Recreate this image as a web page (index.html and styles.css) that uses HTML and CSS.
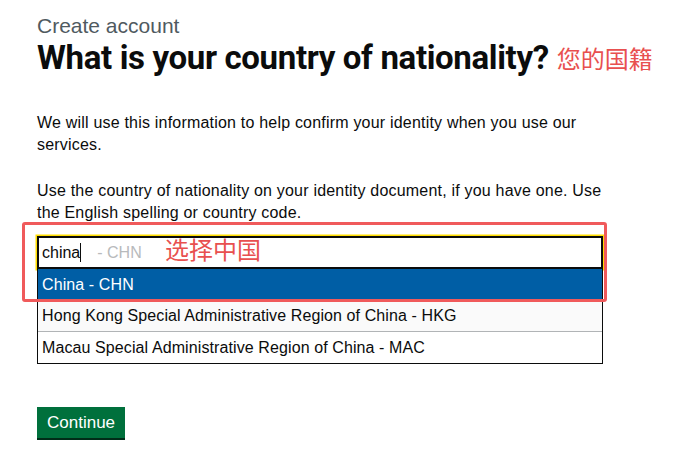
FILE: index.html
```html
<!DOCTYPE html>
<html lang="en">
<head>
<meta charset="utf-8">
<title>Create account - What is your country of nationality?</title>
<link rel="stylesheet" href="styles.css">
</head>
<body>
<main class="page">
  <span class="caption">Create account</span>
  <h1 class="heading">What is your country of nationality?<span class="note note-title">您的国籍</span></h1>
  <p class="body">We will use this information to help confirm your identity when you use our services.</p>
  <p class="body">Use the country of nationality on your identity document, if you have one. Use the English spelling or country code.</p>

  <div class="autocomplete">
    <div class="input">
      <span class="typed">china</span><span class="caret"></span><span class="hint">- CHN</span>
    </div>
    <ul class="menu">
      <li class="option option-active">China - CHN</li>
      <li class="option option-odd">Hong Kong Special Administrative Region of China - HKG</li>
      <li class="option">Macau Special Administrative Region of China - MAC</li>
    </ul>
    <div class="highlight"></div>
    <span class="note note-select">选择中国</span>
  </div>

  <button class="button" type="button">Continue</button>
</main>
</body>
</html>
```

FILE: styles.css
```css
html, body {
  margin: 0;
  padding: 0;
  background: #ffffff;
}

.page {
  padding: 14px 37px 20px 37px;
  font-family: "Liberation Sans", Arial, sans-serif;
  color: #0b0c0c;
  width: 580px;
}

.caption {
  display: block;
  font-size: 21px;
  line-height: 24px;
  color: #505a5f;
}

.heading {
  margin: 2px 0 0 0;
  font-family: Roboto, "Liberation Sans", sans-serif;
  font-weight: 700;
  font-size: 33px;
  line-height: 36px;
  letter-spacing: -0.35px;
  white-space: nowrap;
}

.note {
  font-family: "Noto Sans CJK SC", sans-serif;
  font-weight: 400;
  color: #e8504f;
  letter-spacing: 0;
}

.note-title {
  font-size: 24px;
  margin-left: 8px;
  vertical-align: 1px;
}

.body {
  margin: 0;
  font-size: 16px;
  line-height: 22px;
  letter-spacing: 0.2px;
  color: #0b0c0c;
}

.heading + .body {
  margin-top: 36px;
}

.body + .body {
  margin-top: 24px;
}

.autocomplete {
  position: relative;
  margin-top: 12px;
  width: 566px;
}

.input {
  height: 29px;
  border: 2px solid #0b0c0c;
  box-shadow: 0 0 0 1.5px #ffdd00;
  display: flex;
  align-items: center;
  padding-left: 3px;
  font-size: 16px;
}

.typed {
  color: #0b0c0c;
}

.caret {
  display: inline-block;
  width: 1px;
  height: 19px;
  background: #0b0c0c;
}

.hint {
  color: #b8babc;
  margin-left: 16px;
}

.menu {
  list-style: none;
  margin: 0;
  padding: 0;
  border: 1px solid #0b0c0c;
  border-top: 0;
  width: 564px;
}

.option {
  height: 31px;
  line-height: 31px;
  padding-left: 4px;
  font-size: 16px;
  letter-spacing: 0.1px;
  color: #0b0c0c;
  border-bottom: 1px solid #b1b4b6;
}

.option:last-child {
  border-bottom: 0;
}

.option-active {
  background: #005ea5;
  color: #ffffff;
  border-bottom: 0;
}

.option-odd {
  background: #fafafa;
}

.highlight {
  position: absolute;
  left: -15px;
  top: -14px;
  width: 579px;
  height: 74px;
  border: 3px solid #f05a5b;
  border-radius: 3px;
}

.note-select {
  position: absolute;
  left: 128px;
  top: -3px;
  font-size: 24px;
  line-height: 32px;
}

.button {
  margin-top: 43px;
  font-family: "Liberation Sans", Arial, sans-serif;
  font-size: 17px;
  line-height: 19px;
  color: #ffffff;
  background: #00703c;
  border: 0;
  border-radius: 0;
  padding: 6px 10px 6px 10px;
  box-shadow: 0 2px 0 #002d18;
  cursor: pointer;
}
```
